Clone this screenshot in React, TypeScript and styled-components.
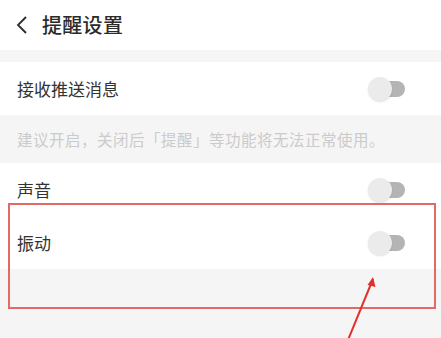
import React from 'react';
import styled, { createGlobalStyle } from 'styled-components';

const GlobalStyle = createGlobalStyle`
  html, body {
    margin: 0;
    padding: 0;
    background: #f5f5f5;
    font-family: "Noto Sans CJK SC", "Noto Sans", sans-serif;
  }
`;

const Page = styled.div`
  position: relative;
  width: 441px;
  height: 338px;
  overflow: hidden;
  background: #f5f5f5;
`;

const Header = styled.div`
  height: 50px;
  background: #ffffff;
  display: flex;
  align-items: center;
  padding-left: 15px;
  gap: 14px;
  margin-bottom: 12px;
`;

const Title = styled.h1`
  margin: 0;
  font-size: 20px;
  font-weight: 500;
  color: #2b2b2b;
  line-height: 1;
  letter-spacing: 0.3px;
`;

const Row = styled.div`
  height: 53px;
  background: #ffffff;
  display: flex;
  align-items: center;
  justify-content: space-between;
  padding: 0 36px 0 17px;
`;

const Label = styled.span`
  font-size: 17px;
  color: #333333;
`;

const Hint = styled.div`
  height: 48px;
  display: flex;
  align-items: center;
  padding-left: 17px;
  font-size: 15.5px;
  letter-spacing: 0.5px;
  color: #cbcbcb;
  white-space: nowrap;
`;

const Switch = styled.div`
  position: relative;
  width: 37px;
  height: 24px;
`;

const Track = styled.div`
  position: absolute;
  right: 0;
  top: 4px;
  width: 26px;
  height: 16px;
  border-radius: 8px;
  background: #b4b4b4;
`;

const Knob = styled.div`
  position: absolute;
  left: 0;
  top: 0;
  width: 24px;
  height: 24px;
  border-radius: 50%;
  background: #ebebeb;
  box-shadow: 0 1px 2px rgba(0, 0, 0, 0.12);
`;

const Highlight = styled.div`
  position: absolute;
  left: 8px;
  top: 203px;
  width: 428px;
  height: 106px;
  box-sizing: border-box;
  border: 2px solid #e26a66;
`;

const Arrow = styled.svg`
  position: absolute;
  left: 330px;
  top: 265px;
`;

const Toggle: React.FC = () => (
  <Switch>
    <Track />
    <Knob />
  </Switch>
);

const App: React.FC = () => (
  <Page>
    <GlobalStyle />
    <Header>
      <svg width="13" height="20" viewBox="0 0 13 20">
        <path d="M11 2 L3 10 L11 18" fill="none" stroke="#2b2b2b" strokeWidth="1.8" />
      </svg>
      <Title>提醒设置</Title>
    </Header>
    <Row>
      <Label>接收推送消息</Label>
      <Toggle />
    </Row>
    <Hint>建议开启，关闭后「提醒」等功能将无法正常使用。</Hint>
    <Row>
      <Label>声音</Label>
      <Toggle />
    </Row>
    <Row>
      <Label>振动</Label>
      <Toggle />
    </Row>
    <Highlight />
    <Arrow width="60" height="80" viewBox="0 0 60 80">
      <line x1="18" y1="75" x2="43" y2="14" stroke="#e0322c" strokeWidth="2" />
      <path d="M43 12 L37.5 20 L45.5 22 Z" fill="#e0322c" />
    </Arrow>
  </Page>
);

export default App;
